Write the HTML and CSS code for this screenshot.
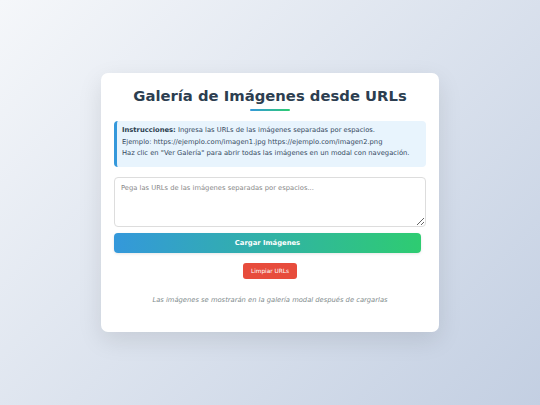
FILE: index.html
```html
<!DOCTYPE html>
<html lang="es">
<head>
<meta charset="utf-8">
<title>Galería de Imágenes desde URLs</title>
<link rel="stylesheet" href="styles.css">
</head>
<body>
<main class="card">
  <h1 class="title">Galería de Imágenes desde URLs</h1>
  <div class="underline"></div>
  <div class="info">
    <p><strong>Instrucciones:</strong> Ingresa las URLs de las imágenes separadas por espacios.</p>
    <p>Ejemplo: https://ejemplo.com/imagen1.jpg https://ejemplo.com/imagen2.png</p>
    <p>Haz clic en "Ver Galería" para abrir todas las imágenes en un modal con navegación.</p>
  </div>
  <textarea class="urls" placeholder="Pega las URLs de las imágenes separadas por espacios..."></textarea>
  <button class="load">Cargar Imágenes</button>
  <div class="actions"><button class="clear">Limpiar URLs</button></div>
  <p class="note">Las imágenes se mostrarán en la galería modal después de cargarlas</p>
</main>
</body>
</html>
```

FILE: styles.css
```css
* { box-sizing: border-box; }
html, body { margin: 0; padding: 0; }
body {
  min-height: 100vh;
  display: flex;
  align-items: center;
  justify-content: center;
  background: linear-gradient(135deg, #f5f7fa 0%, #c3cfe2 100%);
  font-family: "DejaVu Sans", Verdana, sans-serif;
  color: #2c3e50;
}
.card {
  width: 338px;
  background: #fff;
  border-radius: 7px;
  box-shadow: 0 8px 24px rgba(0, 0, 0, 0.1);
  padding: 13px 13px 28px;
  display: flex;
  flex-direction: column;
}
.title {
  margin: 0;
  font-size: 14.8px;
  line-height: 20px;
  text-align: center;
  color: #2c3e50;
  font-weight: bold;
}
.underline {
  width: 40px;
  height: 2px;
  margin: 3px auto 10px;
  background: linear-gradient(90deg, #3498db, #2ecc71);
  border-radius: 1px;
}
.info {
  background: #e8f4fd;
  border-left: 3px solid #3498db;
  border-radius: 4px;
  padding: 4px 6px 7px 5px;
  font-size: 6.75px;
  line-height: 11.6px;
  color: #34495e;
}
.info p { margin: 0; white-space: nowrap; }
.info strong { color: #2c3e50; }
.urls {
  display: block;
  margin-top: 10px;
  width: 100%;
  height: 50px;
  border: 1px solid #ddd;
  border-radius: 4px;
  padding: 6px;
  font-family: "DejaVu Sans", Verdana, sans-serif;
  font-size: 6.75px;
  resize: vertical;
}
.urls::placeholder { color: #888; }
.load {
  margin-top: 6px;
  width: 307px;
  height: 20px;
  border: none;
  border-radius: 4px;
  background: linear-gradient(90deg, #3498db, #2ecc71);
  color: #fff;
  font-family: "DejaVu Sans", Verdana, sans-serif;
  font-size: 6.8px;
  font-weight: bold;
  box-shadow: 0 1px 3px rgba(0,0,0,0.1);
}
.actions {
  display: flex;
  justify-content: center;
  margin-top: 10px;
}
.clear {
  height: 16px;
  padding: 0 8px;
  border: none;
  border-radius: 3px;
  background: #e74c3c;
  color: #fff;
  font-family: "DejaVu Sans", Verdana, sans-serif;
  font-size: 5.8px;
}
.note {
  margin: 17px 0 0;
  text-align: center;
  font-style: italic;
  font-size: 6.75px;
  color: #7f8c8d;
}
```
